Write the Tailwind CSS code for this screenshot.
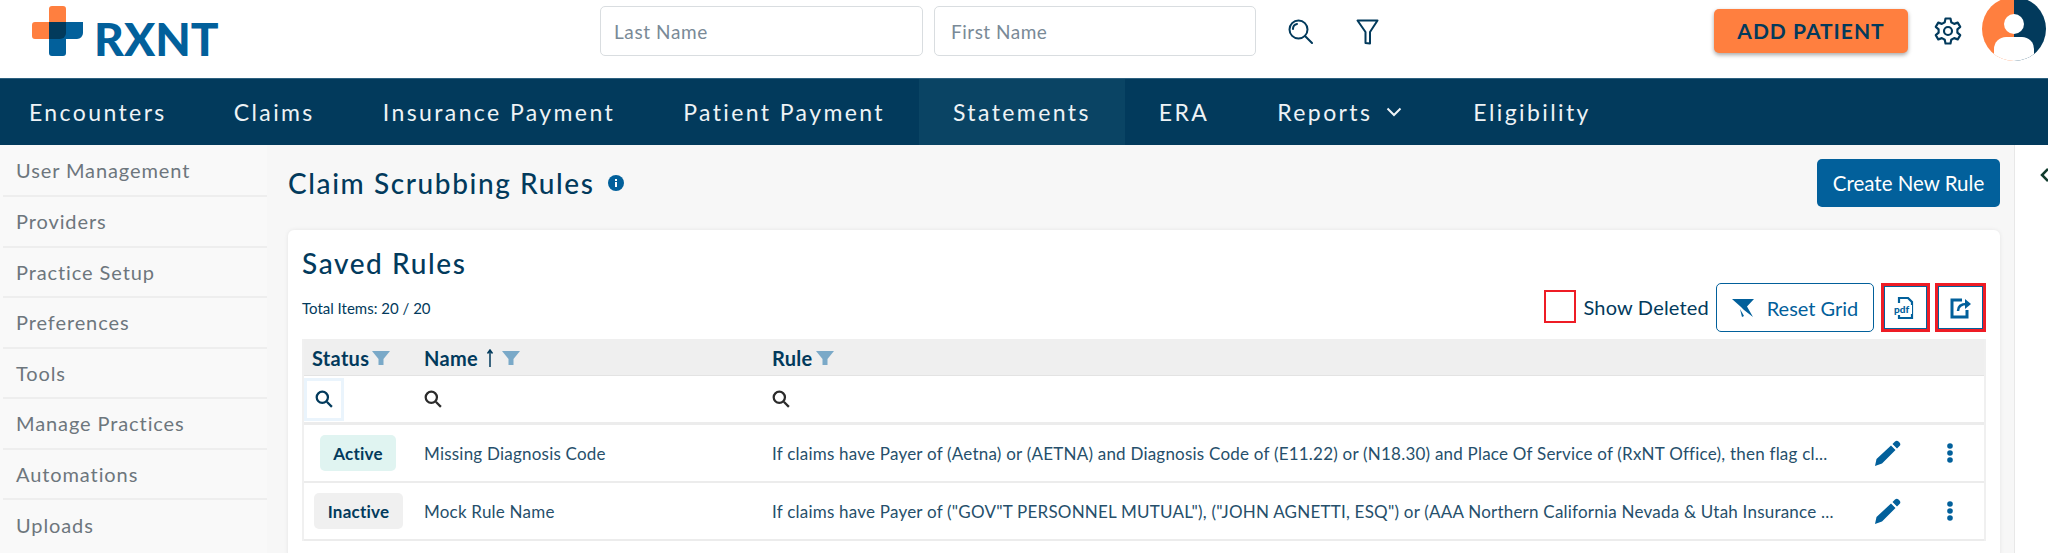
<!DOCTYPE html>
<html lang="en">
<head>
    <meta charset="UTF-8">
    <title>Claim Scrubbing Rules - RXNT</title>
    <script src="https://cdn.jsdelivr.net/npm/@tailwindcss/browser@4"></script>
</head>
<body class="h-[553px] overflow-hidden bg-white font-['Lato','Noto_Sans',sans-serif] text-[#023a5c]">
    <!-- Top header -->
    <header class="flex h-[78px] items-start overflow-hidden bg-white">
        <div class="flex w-[600px] shrink-0 items-start">
            <svg class="ml-[32px] mt-[6px] h-[50px] w-[51px] shrink-0" viewBox="0 0 51 50">
                <path d="M17 3a3 3 0 0 1 3-3h11a3 3 0 0 1 3 3v30H3a3 3 0 0 1-3-3V19a3 3 0 0 1 3-3h14z" fill="#ff7f3f"/>
                <path d="M17 16h34v11a6 6 0 0 1-6 6H34v14a3 3 0 0 1-3 3H20a3 3 0 0 1-3-3z" fill="#02609b"/>
                <path d="M17 16h17v11a6 6 0 0 1-6 6H17z" fill="#023a5c"/>
            </svg>
            <span class="ml-[11px] mt-[11px] text-[46px] leading-[56px] font-black text-[#02609b]">RXNT</span>
        </div>
        <input placeholder="Last Name" class="mt-[6px] h-[50px] w-[323px] rounded-[5px] border border-[#d9dde0] px-[13px] text-[19px] tracking-[0.6px] placeholder:text-[#7a8a97]">
        <input placeholder="First Name" class="ml-[11px] mt-[6px] h-[50px] w-[322px] rounded-[5px] border border-[#d9dde0] pl-[16px] pr-[13px] text-[19px] tracking-[0.5px] placeholder:text-[#7a8a97]">
        <svg class="ml-[32px] mt-[19px] h-[25px] w-[25px]" viewBox="0 0 25 25" fill="none" stroke="#023a5c" stroke-width="2"><circle cx="10.500" cy="10.500" r="9"/><path d="M17 17l7 7M5 10a5 5 0 0 1 4-5" stroke-linecap="round"/></svg>
        <svg class="ml-[43px] mt-[19px] h-[26px] w-[23px]" viewBox="0 0 23 26" fill="none" stroke="#023a5c" stroke-width="2" stroke-linejoin="round"><path d="M1.500 1.500h20L14 13v11.500l-4.500-0.500V13z"/></svg>
        <button class="ml-[335px] mt-[9px] h-[44px] w-[194px] rounded-[5px] bg-[#ff7f3f] text-[21px] font-bold tracking-[1px] text-[#023a5c] shadow-[0_2px_4px_rgba(0,0,0,0.35)]">ADD PATIENT</button>
        <svg class="ml-[25px] mt-[16px] h-[30px] w-[30px]" viewBox="0 0 24 24" fill="none" stroke="#023a5c" stroke-width="1.700" stroke-linejoin="round"><circle cx="12" cy="12" r="3.200"/><path d="M10 2h4l.6 3 2.300 1.300 2.900-1 2 3.400-2.300 2v2.600l2.300 2-2 3.400-2.900-1L14.600 19 14 22h-4l-.6-3-2.300-1.300-2.900 1-2-3.400 2.300-2v-2.600l-2.300-2 2-3.400 2.900 1L9.400 5z"/></svg>
        <svg class="-mt-[3px] ml-[19px] h-[64px] w-[64px] shrink-0" viewBox="0 0 64 64">
            <clipPath id="avatar"><circle cx="32" cy="32" r="32"/></clipPath>
            <g clip-path="url(#avatar)">
                <rect width="32" height="64" fill="#ff7f3f"/>
                <rect x="32" width="32" height="64" fill="#023a5c"/>
                <circle cx="32" cy="27" r="10" fill="#fff"/>
                <path d="M12 52a12 12 0 0 1 12-12h16a12 12 0 0 1 12 12v12H12z" fill="#fff"/>
            </g>
        </svg>
    </header>

    <!-- Main navigation -->
    <nav class="flex h-[67px] items-stretch border-t border-[#2d6180] bg-[#023a5c] text-[23px] tracking-[2.400px] text-[#eef3f6]">
        <a class="-ml-[5px] flex items-center pl-[34px] pr-[33px]">Encounters</a>
        <a class="flex items-center px-[34px]">Claims</a>
        <a class="flex items-center px-[34px]">Insurance Payment</a>
        <a class="flex items-center px-[34px]">Patient Payment</a>
        <a class="flex items-center bg-[#0a4464] px-[34px]">Statements</a>
        <a class="flex items-center px-[34px]">ERA</a>
        <a class="flex items-center gap-[14px] pl-[34px] pr-[36px]">Reports
            <svg class="h-[10px] w-[16px]" viewBox="0 0 16 10" fill="none" stroke="#eef3f6" stroke-width="2"><path d="M1.500 1.500L8 8l6.500-6.500"/></svg>
        </a>
        <a class="flex items-center px-[35px]">Eligibility</a>
    </nav>

    <div class="flex h-[408px] overflow-hidden">
        <!-- Sidebar -->
        <aside class="w-[267px] shrink-0 bg-[#f9f9f9] pl-[3px] text-[20px] tracking-[0.9px] text-[#6d767d]">
            <div class="flex h-[52px] items-center border-b-2 border-[#eeeeee] pl-[13px]">User Management</div>
            <div class="flex h-[50.500px] items-center border-b-2 border-[#eeeeee] pl-[13px]">Providers</div>
            <div class="flex h-[50.500px] items-center border-b-2 border-[#eeeeee] pl-[13px]">Practice Setup</div>
            <div class="flex h-[50.500px] items-center border-b-2 border-[#eeeeee] pl-[13px]">Preferences</div>
            <div class="flex h-[50.500px] items-center border-b-2 border-[#eeeeee] pl-[13px]">Tools</div>
            <div class="flex h-[50.500px] items-center border-b-2 border-[#eeeeee] pl-[13px]">Manage Practices</div>
            <div class="flex h-[50.500px] items-center border-b-2 border-[#eeeeee] pl-[13px]">Automations</div>
            <div class="flex h-[50.500px] items-center pl-[13px]">Uploads</div>
        </aside>

        <!-- Page content -->
        <main class="w-[1747px] shrink-0 bg-[#f7f7f7] pl-[21px] pr-[14px]">
            <div class="flex h-[85px] items-start justify-between">
                <div class="mt-[21px] flex items-center gap-[13px]">
                    <h1 class="text-[28px] font-medium leading-[34px] tracking-[1.600px]">Claim Scrubbing Rules</h1>
                    <svg class="h-[16px] w-[16px]" viewBox="0 0 16 16"><circle cx="8" cy="8" r="8" fill="#02609b"/><rect x="7" y="7" width="2" height="5" fill="#fff"/><rect x="7" y="4" width="2" height="2" fill="#fff"/></svg>
                </div>
                <button class="mt-[14px] h-[48px] w-[183px] rounded-[5px] bg-[#02609b] text-[20.500px] text-white">Create New Rule</button>
            </div>

            <section class="h-[330px] rounded-[6px] bg-white pl-[14px] pr-[14px] shadow-[0_0_4px_rgba(0,0,0,0.08)]">
                <h2 class="pt-[16px] text-[28px] font-medium leading-[34px] tracking-[1.600px]">Saved Rules</h2>
                <div class="mt-[3px] flex h-[50px] items-start justify-between">
                    <span class="mt-[15px] text-[15px] leading-[20px]">Total Items: 20 / 20</span>
                    <div class="flex items-start">
                        <span class="mt-[7px] h-[33px] w-[32px] border-2 border-[#ee1c25] bg-white"></span>
                        <span class="ml-[7px] mt-[12px] text-[20px] leading-[24px] tracking-[0.2px]">Show Deleted</span>
                        <button class="ml-[7px] flex h-[49px] w-[158px] items-center justify-center gap-[13px] rounded-[5px] border border-[#02609b] text-[20px] text-[#02609b]">
                            <svg class="h-[20px] w-[22px]" viewBox="0 0 22 20"><path d="M0 1h22l-7 7.500L21 19l-9-7-3-3z" fill="#02609b"/><path d="M8 11l4 7-2 1z" fill="#02609b"/></svg>
                            Reset Grid
                        </button>
                        <button class="ml-[7px] flex h-[49px] w-[49px] items-center justify-center border-[3px] border-[#ee1c25] shadow-[inset_0_0_0_1px_#02609b]">
                            <svg class="-ml-[3px] h-[22px] w-[20px]" viewBox="0 0 20 22" fill="none"><path d="M5 6V1h9l4 4v16H5v-3" stroke="#02609b" stroke-width="2.200"/><rect y="8" width="18" height="9" fill="#fff"/><text x="0" y="15.500" font-size="10" font-weight="900" fill="#02609b" font-family="Lato">pdf</text></svg>
                        </button>
                        <button class="ml-[5px] flex h-[49px] w-[51px] items-center justify-center border-[3px] border-[#ee1c25] shadow-[inset_0_0_0_1px_#02609b]">
                            <svg class="h-[22px] w-[22px]" viewBox="0 0 22 22" fill="none" stroke="#02609b" stroke-width="3"><path d="M12 3H2v17h15v-7"/><path d="M8 14c0-5 3-7 9-7" stroke-width="2.500"/><path d="M15 2l6 5-6 5z" fill="#02609b" stroke="none"/></svg>
                        </button>
                    </div>
                </div>

                <!-- Rules grid -->
                <div class="mt-[6px] border-x-2 border-[#f0f0f0] text-[#023a5c]">
                    <div class="flex h-[37px] items-center border-b border-[#e3e3e3] bg-[#efefef] pt-[2px] text-[20px] font-bold tracking-[0.3px]">
                        <div class="flex w-[120px] items-center gap-[3px] pl-[8px]">Status
                            <svg class="h-[14px] w-[18px]" viewBox="0 0 18 14"><path d="M0 0h18l-6.500 8v6h-5V8z" fill="#7aa9c8"/></svg>
                        </div>
                        <div class="flex w-[348px] items-center gap-[8px]">Name
                            <svg class="h-[18px] w-[8px]" viewBox="0 0 8 18" fill="none" stroke="#023a5c" stroke-width="1.500"><path d="M4 18V2M1.500 4.500L4 1l2.500 3.500"/></svg>
                            <svg class="h-[14px] w-[18px]" viewBox="0 0 18 14"><path d="M0 0h18l-6.500 8v6h-5V8z" fill="#7aa9c8"/></svg>
                        </div>
                        <div class="flex items-center gap-[3px]">Rule
                            <svg class="h-[14px] w-[18px]" viewBox="0 0 18 14"><path d="M0 0h18l-6.500 8v6h-5V8z" fill="#7aa9c8"/></svg>
                        </div>
                    </div>
                    <div class="flex h-[49px] items-center border-b-[3px] border-[#ececec]">
                        <div class="flex w-[120px] items-center">
                            <span class="flex h-[43px] w-[40px] items-center justify-center border-[3px] border-[#eaf4fc]">
                                <svg class="h-[18px] w-[18px]" viewBox="0 0 16 16" fill="none" stroke="#023a5c" stroke-width="2"><circle cx="6.500" cy="6.500" r="5"/><path d="M10.500 10.500L15 15"/></svg>
                            </span>
                        </div>
                        <div class="w-[348px]">
                            <svg class="h-[18px] w-[18px]" viewBox="0 0 16 16" fill="none" stroke="#2b2b2b" stroke-width="2"><circle cx="6.500" cy="6.500" r="5"/><path d="M10.500 10.500L15 15"/></svg>
                        </div>
                        <svg class="h-[18px] w-[18px]" viewBox="0 0 16 16" fill="none" stroke="#2b2b2b" stroke-width="2"><circle cx="6.500" cy="6.500" r="5"/><path d="M10.500 10.500L15 15"/></svg>
                    </div>
                    <div class="flex h-[58px] items-center border-b-2 border-[#ececec] text-[17px] tracking-[0.22px]">
                        <div class="w-[120px] pl-[16px]"><span class="flex h-[36px] w-[76px] items-center justify-center rounded-[5px] bg-[#e0f4f1] pt-[1px] font-bold">Active</span></div>
                        <div class="w-[348px] pt-[2px] text-[#264f6b]">Missing Diagnosis Code</div>
                        <div class="w-[1058px] whitespace-nowrap pt-[2px] text-[#264f6b]">If claims have Payer of (Aetna) or (AETNA) and Diagnosis Code of (E11.22) or (N18.30) and Place Of Service of (RxNT Office), then flag cl...</div>
                        <svg class="ml-[45px] h-[26px] w-[26px]" viewBox="0 0 26 26"><path d="M20 1.500a2.500 2.500 0 0 1 3.500 0l1 1a2.500 2.500 0 0 1 0 3.500L22 8.500 17.500 4zM16 5.500l4.500 4.500L7 23.500 0 26l1.500-7z" fill="#02609b"/></svg>
                        <svg class="ml-[46px] h-[20px] w-[6px]" viewBox="0 0 6 20" fill="#02609b"><circle cx="3" cy="3" r="2.800"/><circle cx="3" cy="10" r="2.800"/><circle cx="3" cy="17" r="2.800"/></svg>
                    </div>
                    <div class="flex h-[58px] items-center border-b-2 border-[#ececec] text-[17px] tracking-[0.22px]">
                        <div class="w-[120px] pl-[10px]"><span class="flex h-[36px] w-[89px] items-center justify-center rounded-[5px] bg-[#f0f0f0] pt-[1px] font-bold">Inactive</span></div>
                        <div class="w-[348px] pt-[2px] text-[#264f6b]">Mock Rule Name</div>
                        <div class="w-[1058px] whitespace-nowrap pt-[2px] text-[#264f6b]">If claims have Payer of ("GOV"T PERSONNEL MUTUAL"), ("JOHN AGNETTI, ESQ") or (AAA Northern California Nevada &amp; Utah Insurance ...</div>
                        <svg class="ml-[45px] h-[26px] w-[26px]" viewBox="0 0 26 26"><path d="M20 1.500a2.500 2.500 0 0 1 3.500 0l1 1a2.500 2.500 0 0 1 0 3.500L22 8.500 17.500 4zM16 5.500l4.500 4.500L7 23.500 0 26l1.500-7z" fill="#02609b"/></svg>
                        <svg class="ml-[46px] h-[20px] w-[6px]" viewBox="0 0 6 20" fill="#02609b"><circle cx="3" cy="3" r="2.800"/><circle cx="3" cy="10" r="2.800"/><circle cx="3" cy="17" r="2.800"/></svg>
                    </div>
                </div>
            </section>
        </main>

        <!-- Collapsed right panel -->
        <div class="flex-1 border-l border-[#e8e8e8] bg-white pl-[25px] pt-[23px]">
            <svg class="h-[14px] w-[9px]" viewBox="0 0 9 14" fill="none" stroke="#123c2d" stroke-width="2.500"><path d="M8 1L2 7l6 6"/></svg>
        </div>
    </div>
</body>
</html>
